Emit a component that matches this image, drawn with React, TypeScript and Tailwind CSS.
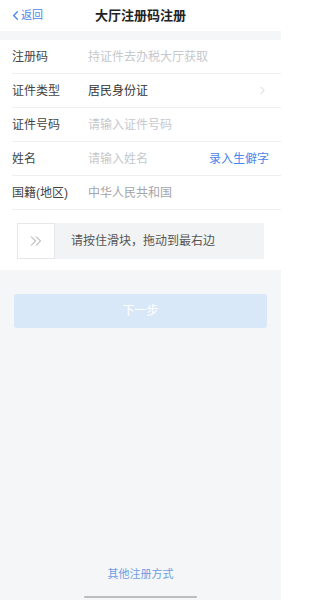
import { ChevronLeft, ChevronRight } from "lucide-react";

const FONT = { fontFamily: '"Liberation Sans", "Noto Sans CJK SC", sans-serif' };

type Row = {
  label: string;
  value: string;
  tone: "placeholder" | "value" | "muted";
  extra?: "arrow" | "link";
};

const ROWS: Row[] = [
  { label: "注册码", value: "持证件去办税大厅获取", tone: "placeholder" },
  { label: "证件类型", value: "居民身份证", tone: "value", extra: "arrow" },
  { label: "证件号码", value: "请输入证件号码", tone: "placeholder" },
  { label: "姓名", value: "请输入姓名", tone: "placeholder", extra: "link" },
  { label: "国籍(地区)", value: "中华人民共和国", tone: "muted" },
];

const toneClass = {
  placeholder: "text-[#c6c8cd]",
  value: "text-[#333333]",
  muted: "text-[#a3a5aa]",
};

export default function App() {
  return (
    <div className="flex h-[600px] w-[281px] flex-col bg-[#f5f6f8]" style={FONT}>
      {/* 顶部导航 */}
      <header className="relative flex h-[31px] shrink-0 items-center justify-center bg-white">
        <button className="absolute left-[8px] top-0 flex h-full items-center text-[#4a85e8]">
          <ChevronLeft className="size-[15px]" strokeWidth={2} />
          <span className="-ml-[2px] text-[11px]">返回</span>
        </button>
        <h1 className="text-[13px] font-bold text-[#222222]">大厅注册码注册</h1>
      </header>

      {/* 表单 */}
      <section className="mt-[9px] bg-white pb-[11px]">
        <div className="pl-[12px]">
          {ROWS.map((row) => (
            <div
              key={row.label}
              className="flex h-[34px] items-center border-b border-[#eeeff1] pr-[12px] text-[12px]"
            >
              <span className="w-[76px] shrink-0 text-[#444444]">{row.label}</span>
              <span className={`flex-1 ${toneClass[row.tone]}`}>{row.value}</span>
              {row.extra === "arrow" && (
                <ChevronRight className="size-[13px] text-[#c4c6cb]" strokeWidth={1.5} />
              )}
              {row.extra === "link" && (
                <span className="text-[12px] text-[#4a85e8]">录入生僻字</span>
              )}
            </div>
          ))}
        </div>

        {/* 滑块验证 */}
        <div className="mx-[17px] mt-[13px] flex h-[36px] items-center bg-[#f2f3f5]">
          <div className="flex h-full w-[38px] items-center justify-center border border-[#e6e7ea] bg-white">
            <svg width="14" height="12" viewBox="0 0 14 12" fill="none" stroke="#9a9ca1" strokeWidth="1">
              <path d="M2 1.5 L6.5 6 L2 10.5" />
              <path d="M7 1.5 L11.5 6 L7 10.5" />
            </svg>
          </div>
          <span className="ml-[16px] text-[12px] text-[#555555]">请按住滑块，拖动到最右边</span>
        </div>
      </section>

      {/* 下一步 */}
      <div className="px-[14px] pt-[24px]">
        <button className="flex h-[34px] w-full items-center justify-center rounded-[3px] bg-[#d9e8f9] text-[12px] text-white">
          下一步
        </button>
      </div>

      <div className="flex-1" />

      <div className="flex flex-col items-center">
        <span className="text-[11px] text-[#6d9ee3]">其他注册方式</span>
        <div className="mb-[2px] mt-[14px] h-[2px] w-[113px] rounded-full bg-[#bdbdbd]" />
      </div>
    </div>
  );
}
